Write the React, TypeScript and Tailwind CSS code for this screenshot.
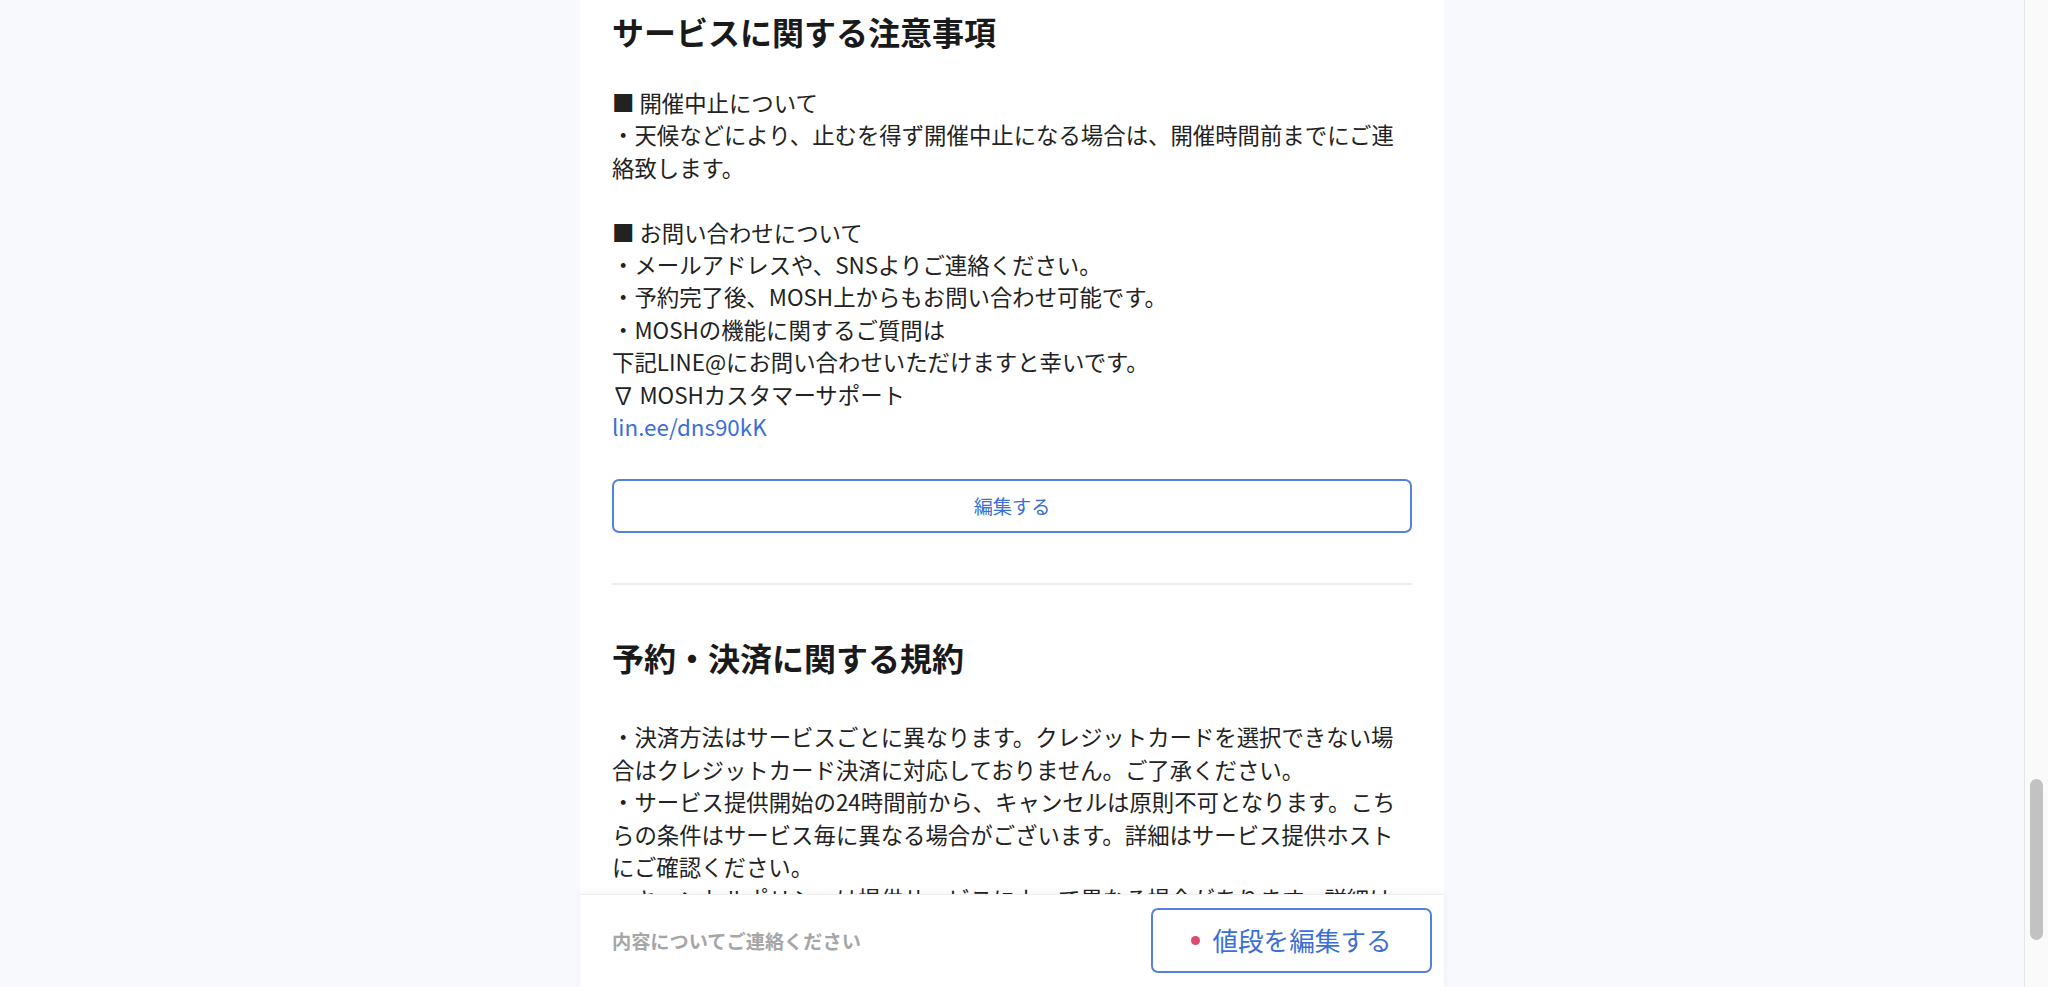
import React from "react";

const notes = [
  "■ 開催中止について",
  "・天候などにより、止むを得ず開催中止になる場合は、開催時間前までにご連絡致します。",
  "",
  "■ お問い合わせについて",
  "・メールアドレスや、SNSよりご連絡ください。",
  "・予約完了後、MOSH上からもお問い合わせ可能です。",
  "・MOSHの機能に関するご質問は",
  "下記LINE@にお問い合わせいただけますと幸いです。",
  "∇ MOSHカスタマーサポート",
];

const terms = [
  "・決済方法はサービスごとに異なります。クレジットカードを選択できない場合はクレジットカード決済に対応しておりません。ご了承ください。",
  "・サービス提供開始の24時間前から、キャンセルは原則不可となります。こちらの条件はサービス毎に異なる場合がございます。詳細はサービス提供ホストにご確認ください。",
  "・キャンセルポリシーは提供サービスによって異なる場合があります。詳細はサービス提供ホストにご確認ください。",
  "・当日の無断キャンセルについては、サービス料金の全額をお支払いいただく場合がございます。",
];

function Lines({ lines }: { lines: string[] }) {
  return (
    <div className="text-[22.4px] leading-[32.4px] text-[#222222]">
      {lines.map((line, i) =>
        line === "" ? (
          <div key={i} className="h-[32.4px]" />
        ) : (
          <p key={i}>{line}</p>
        )
      )}
    </div>
  );
}

export default function App() {
  return (
    <div className="flex h-screen overflow-hidden bg-[#f8f9fc] font-['Noto_Sans_CJK_JP',sans-serif]">
      <main className="flex flex-1 justify-center overflow-hidden">
        <div className="relative flex h-full w-[864px] flex-col bg-white">
          <div className="flex-1 overflow-hidden px-8 pt-[7px]">
            {/* サービスに関する注意事項 */}
            <h2 className="text-[32px] font-bold leading-[48px] text-[#1a1a1a]">
              サービスに関する注意事項
            </h2>
            <div className="mt-[31px]">
              <Lines lines={notes} />
              <a className="block text-[22.4px] leading-[32.4px] text-[#3b6fd6]">
                lin.ee/dns90kK
              </a>
            </div>
            <button className="mt-[37px] flex h-[54px] w-full items-center justify-center rounded-[7px] border-2 border-[#5480e0] text-[19.2px] font-normal text-[#3b6fd6]">
              編集する
            </button>
            <div className="mt-[50px] h-[2px] bg-[#ececec]" />

            {/* 予約・決済に関する規約 */}
            <h2 className="mt-[48px] text-[32px] font-bold leading-[48px] text-[#1a1a1a]">
              予約・決済に関する規約
            </h2>
            <div className="mt-[39px]">
              <Lines lines={terms} />
            </div>
          </div>

          <footer className="absolute bottom-0 left-0 right-0 flex h-[93px] items-center justify-between border-t border-[#efefef] bg-white pl-8 pr-3 shadow-[0_-2px_6px_rgba(0,0,0,0.04)]">
            <span className="text-[19.2px] font-semibold text-[#a6a6a6]">
              内容についてご連絡ください
            </span>
            <button className="mb-[1px] flex h-[65px] w-[281px] items-center justify-center gap-3 rounded-[7px] border-2 border-[#5480e0] bg-white text-[25.6px] font-normal text-[#3b6fd6]">
              <span className="h-[9px] w-[9px] rounded-full bg-[#e0486e]" />
              値段を編集する
            </button>
          </footer>
        </div>
      </main>

      {/* scrollbar */}
      <div className="w-[24px] border-l border-[#e6e6e6] bg-[#fafafa] pl-[5px]">
        <div className="mt-[779px] h-[161px] w-[13px] rounded-full bg-[#c2c2c2]" />
      </div>
    </div>
  );
}
